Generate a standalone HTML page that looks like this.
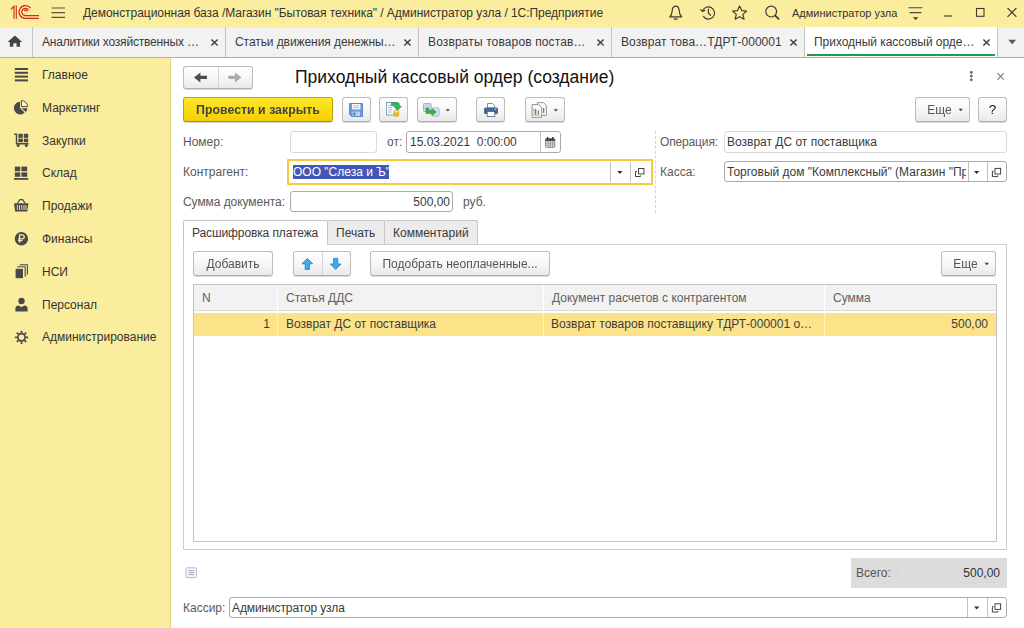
<!DOCTYPE html>
<html lang="ru"><head><meta charset="utf-8"><title>1С:Предприятие</title>
<style>
*{box-sizing:border-box;margin:0;padding:0}
html,body{width:1024px;height:628px;overflow:hidden;background:#fff}
body{font-family:"Liberation Sans",Arial,sans-serif;font-size:12px;color:#333;position:relative}
.abs{position:absolute}
svg{position:absolute;overflow:visible}
#titlebar{left:0;top:0;width:1024px;height:27px;background:#fbed9e}
#tabbar{left:0;top:27px;width:1024px;height:31px;background:#f2f2f2;border-bottom:1px solid #b0b0b0}
#sidebar{left:0;top:58px;width:171px;height:570px;background:#fbed9e;border-right:1px solid #e3d48a}
.t{position:absolute;white-space:nowrap;line-height:16px}
.tab{position:absolute;top:0;height:30px;border-right:1px solid #c4c4c4}
.tab .t{top:7px;left:9px;font-size:12px;color:#3a3a3a}
.tab .x{position:absolute;top:11.5px;left:177.5px}
.btn{position:absolute;border:1px solid #bcbcbc;border-bottom-color:#b0b0b0;border-radius:3px;background:linear-gradient(#ffffff 0%,#f7f7f7 50%,#e9e9e9 100%);box-shadow:0 1px 0 rgba(0,0,0,.15);font-size:12px;color:#545454;text-align:center;white-space:nowrap}
.btn .c{position:absolute;left:0;right:0;top:4px;line-height:16px;will-change:transform}
.inp{position:absolute;border:1px solid #aaa;border-radius:3px;background:#fff;height:22px}
.inp.ro{border-color:#d9d9d9}
.inp .t{top:2px;left:2px;color:#3a3a3a}
.inp .dv{position:absolute;top:0;bottom:0;width:1px;background:#c0c0c0}
.lbl{position:absolute;white-space:nowrap;font-size:12px;line-height:16px;color:#5a5a5a}
.menu .t{left:42px;font-size:12px;color:#333}
.th{position:absolute;top:0;height:26px;border-right:1px solid #fff}
.th .t{top:5px;left:8px;color:#606060}
.td{position:absolute;top:0;height:23px;border-right:1px solid #fdf1c0}
.td .t{top:3px;color:#3c3c3c}
</style></head><body>
<div id="titlebar" class="abs">
  <svg width="1024" height="27" style="left:0;top:0" viewBox="0 0 1024 27">
    <!-- 1C logo -->
    <g fill="none" stroke="#d9251d" stroke-width="1.1">
      <path d="M11 9.3 L14 6.2 V18.8"/>
      <path d="M16.3 5.6 V18.8"/>
      <path d="M30.6 8.2 A6.4 6.4 0 1 0 25.5 18.4 H39"/>
      <path d="M28.6 10.2 A3.6 3.6 0 1 0 25.5 15.6 H39"/>
      <path d="M27.2 11.4 A1.7 1.7 0 0 0 24.2 10.8"/>
    </g>
    <!-- hamburger -->
    <g stroke="#57533a" stroke-width="1.2"><path d="M51.5 8 H65 M51.5 12.6 H65 M51.5 17.3 H65"/></g>
    <!-- bell -->
    <g fill="none" stroke="#3f3d30" stroke-width="1.2" stroke-linejoin="round" stroke-linecap="round">
      <path d="M669.8 16.8 C672 15 672 13 672.2 10.5 C672.5 7.5 674 6.2 675.7 6.2 C677.4 6.2 678.9 7.5 679.2 10.5 C679.4 13 679.4 15 681.6 16.8 Z"/>
      <path d="M674.2 18.8 Q675.7 20 677.2 18.8"/>
      <!-- history -->
      <path d="M702.6 11.2 A6.1 6.1 0 1 1 703.4 16.4"/>
      <path d="M700.8 9.6 L702.6 11.6 L704.8 10.2"/>
      <path d="M708.4 9.2 V13 L710.6 15.4"/>
      <!-- star -->
      <path d="M739.6 6 L741.7 10.6 L746.6 11.1 L742.9 14.4 L744 19.2 L739.6 16.7 L735.2 19.2 L736.3 14.4 L732.6 11.1 L737.5 10.6 Z"/>
      <!-- search -->
      <circle cx="771.2" cy="11.6" r="5.4"/>
      <path d="M775.2 15.6 L778.6 18.8" stroke-width="1.8"/>
    </g>
    <!-- settings -->
    <g stroke="#4a4838" stroke-width="1.1"><path d="M908.5 7.8 H922.3 M909.6 12.6 H921.4"/></g>
    <path d="M912.8 17.2 H918.4 L915.6 19.9 Z" fill="#3c3a2e"/>
    <!-- window buttons -->
    <g fill="none" stroke="#3c3a2e" stroke-width="1.1">
      <path d="M944 16 H952"/>
      <rect x="976.5" y="8.5" width="7.5" height="7.8"/>
      <path d="M1007.5 8 L1016.4 16.8 M1016.4 8 L1007.5 16.8"/>
    </g>
  </svg>

  <div class="t" style="left:83px;top:5px;font-size:12px;color:#333;letter-spacing:-0.04px">Демонстрационная база /Магазин "Бытовая техника" / Администратор узла / 1С:Предприятие</div>
  <div class="t" style="left:792px;top:5px;font-size:11px;color:#333">Администратор узла</div>
</div>
<div id="tabbar" class="abs"><div class="abs" style="left:0;top:0;width:1024px;height:1px;background:#f7f0cf"></div>
  <svg width="1024" height="31" style="left:0;top:0" viewBox="0 27 1024 31">
    <path d="M14.9 35.6 L7.6 42 H9.8 V46.8 H13.3 V43.2 H16.5 V46.8 H20 V42 H22.2 Z" fill="#444"/>
    <path d="M1008.3 39.8 H1016.1 L1012.2 44.2 Z" fill="#555"/>
  </svg>

  <div class="tab" style="left:0;width:33px"></div>
  <div class="tab" style="left:33px;width:193px"><div class="t" style="letter-spacing:-0.18px">Аналитики хозяйственных …</div><svg class="x" width="7" height="7" viewBox="0 0 7 7"><path d="M0.4 0.4 L6.6 6.6 M6.6 0.4 L0.4 6.6" stroke="#3a3a3a" stroke-width="1.35" fill="none"/></svg></div>
  <div class="tab" style="left:226px;width:193px"><div class="t" style="letter-spacing:-0.075px">Статьи движения денежны…</div><svg class="x" width="7" height="7" viewBox="0 0 7 7"><path d="M0.4 0.4 L6.6 6.6 M6.6 0.4 L0.4 6.6" stroke="#3a3a3a" stroke-width="1.35" fill="none"/></svg></div>
  <div class="tab" style="left:419px;width:193px"><div class="t" style="letter-spacing:0.13px">Возвраты товаров постав…</div><svg class="x" width="7" height="7" viewBox="0 0 7 7"><path d="M0.4 0.4 L6.6 6.6 M6.6 0.4 L0.4 6.6" stroke="#3a3a3a" stroke-width="1.35" fill="none"/></svg></div>
  <div class="tab" style="left:612px;width:193px"><div class="t" style="letter-spacing:0.07px">Возврат това…ТДРТ-000001</div><svg class="x" width="7" height="7" viewBox="0 0 7 7"><path d="M0.4 0.4 L6.6 6.6 M6.6 0.4 L0.4 6.6" stroke="#3a3a3a" stroke-width="1.35" fill="none"/></svg></div>
  <div class="tab" style="left:805px;width:193px;background:#fff"><div class="t" style="left:9px;letter-spacing:-0.04px">Приходный кассовый орде…</div><svg class="x" width="7" height="7" viewBox="0 0 7 7"><path d="M0.4 0.4 L6.6 6.6 M6.6 0.4 L0.4 6.6" stroke="#3a3a3a" stroke-width="1.35" fill="none"/></svg>
    <div class="abs" style="left:2px;right:2px;top:27px;height:2px;background:#1f9d49"></div></div>
</div>
<div id="sidebar" class="abs menu">
  <svg width="40" height="570" style="left:0;top:0" viewBox="0 58 40 570">
    <g fill="#494949" stroke="none">
      <!-- main -->
      <rect x="14.8" y="68" width="13.2" height="2"/><rect x="14.8" y="71.8" width="13.2" height="2"/><rect x="14.8" y="75.6" width="13.2" height="2"/><rect x="14.8" y="79.4" width="13.2" height="2"/>
      <!-- marketing pie -->
      <path d="M20 101.8 A6.3 6.3 0 1 0 24.6 112.6 L20 108 Z"/>
      <path d="M21.6 108.2 H27.4 A6 6 0 0 1 25.8 111.9 Z"/>
      <path d="M21.4 100.6 A6 6 0 0 1 27.6 106.6 H21.4 Z" fill="#fdf6d0" stroke="#494949" stroke-width="1"/>
      <!-- purchases cart -->
      <path d="M14.2 133.6 H17.2 V143 H28.6 V144.4 H15.8 V135 H14.2 Z"/>
      <rect x="18.4" y="133.8" width="4.4" height="4"/><rect x="23.8" y="133.8" width="4.4" height="4"/>
      <rect x="18.4" y="138.6" width="4.4" height="3.6"/><rect x="23.8" y="138.6" width="4.4" height="3.6"/>
      <circle cx="18.2" cy="145.6" r="1.5"/><circle cx="26.4" cy="145.6" r="1.5"/>
      <!-- warehouse -->
      <rect x="14.8" y="166.6" width="5.4" height="4.6"/><rect x="21.4" y="166.6" width="5.8" height="4.6"/>
      <rect x="14.8" y="172.4" width="5.4" height="4.4"/><rect x="21.4" y="172.4" width="5.8" height="4.4"/>
      <rect x="14" y="178" width="14.2" height="1.8"/>
      <!-- sales basket -->
      <path d="M14 203.2 H28.4 L27.2 211.6 H15.2 Z"/>
      <!-- finance -->
      <circle cx="21.4" cy="238.7" r="6.7"/>
      <!-- nsi -->
      <rect x="15.6" y="268.8" width="7.4" height="9.4"/>
      <!-- personnel -->
      <circle cx="21.5" cy="301" r="3.2"/>
      <path d="M15.4 311.4 V308.4 Q15.4 306 18.4 305.6 L21.5 307 L24.6 305.6 Q27.6 306 27.6 308.4 V311.4 Z"/>
    </g>
    <g fill="none" stroke="#494949">
      <path d="M17.4 203 L20 199.6 M25 203 L22.6 199.6 M19.4 199.6 H23.4" stroke-width="1.2"/>
      <path d="M17.4 205 V210 M19.6 205 V210 M21.8 205 V210 M24 205 V210 M26 205 V210" stroke="#fbed9e" stroke-width="0.9"/>
      <path d="M19.6 242.6 V234.8 H22.2 A2 2 0 0 1 22.2 238.8 H18 M18 240.6 H22.4" stroke="#fbed9e" stroke-width="1.3"/>
      <path d="M18 267.4 V266.8 H25.2 V276 H24.4 M20.2 265.2 V264.8 H27.4 V274 H26.6" stroke-width="1.1"/>
      <circle cx="21.5" cy="337.3" r="3.6" stroke-width="1.7"/>
      <path d="M25.70 337.30 L28.10 337.30 M24.47 340.27 L26.17 341.97 M21.50 341.50 L21.50 343.90 M18.53 340.27 L16.83 341.97 M17.30 337.30 L14.90 337.30 M18.53 334.33 L16.83 332.63 M21.50 333.10 L21.50 330.70 M24.47 334.33 L26.17 332.63 " stroke-width="1.8"/>
    </g>
  </svg>

  <div class="t" style="top:9px">Главное</div>
  <div class="t" style="top:42px">Маркетинг</div>
  <div class="t" style="top:75px">Закупки</div>
  <div class="t" style="top:107px">Склад</div>
  <div class="t" style="top:140px">Продажи</div>
  <div class="t" style="top:173px">Финансы</div>
  <div class="t" style="top:206px">НСИ</div>
  <div class="t" style="top:239px">Персонал</div>
  <div class="t" style="top:271px">Администрирование</div>
</div>
<div id="main" class="abs" style="left:0;top:0;width:1024px;height:628px">
  <!-- nav -->
  <div class="btn" style="left:183px;top:66px;width:70px;height:23px"><div class="abs" style="left:34px;top:0;bottom:0;width:1px;background:#d5d5d5"></div></div>
  <div class="t" style="left:295px;top:66px;font-size:17.5px;line-height:22px;color:#111">Приходный кассовый ордер (создание)</div>
  <!-- toolbar -->
  <div class="btn" style="left:183px;top:97px;width:150px;height:25px;background:linear-gradient(#ffe72b,#f5d000);border-color:#c4a700 #bfa200 #a89000;color:#444;font-weight:bold;font-size:12.35px"><div class="c">Провести и закрыть</div></div>
  <div class="btn" style="left:342px;top:97px;width:29px;height:25px"></div>
  <div class="btn" style="left:379px;top:97px;width:29px;height:25px"></div>
  <div class="btn" style="left:417px;top:97px;width:40px;height:25px"></div>
  <div class="btn" style="left:476px;top:97px;width:29px;height:25px"></div>
  <div class="btn" style="left:525px;top:97px;width:40px;height:25px"></div>
  <div class="btn" style="left:915px;top:97px;width:55px;height:25px"><div class="c" style="right:6px">Еще</div></div>
  <div class="btn" style="left:978px;top:97px;width:29px;height:25px;color:#111;font-size:13.5px"><div class="c">?</div></div>
  <!-- fields -->
  <div class="lbl" style="left:183px;top:134px">Номер:</div>
  <div class="inp ro" style="left:290px;top:131px;width:87px"></div>
  <div class="lbl" style="left:387px;top:134px">от:</div>
  <div class="inp" style="left:406px;top:131px;width:155px"><div class="t" style="left:3px">15.03.2021&nbsp; 0:00:00</div><div class="dv" style="left:133px"></div></div>
  <div class="lbl" style="left:183px;top:164px">Контрагент:</div>
  <div class="inp" style="left:287px;top:159px;width:366px;height:26px;border:2px solid #f8cb3c;border-radius:1px">
     <div class="abs" style="left:4px;top:4px;width:96px;height:14px;background:#4457b8"></div>
     <div class="t" style="left:4px;top:3px;color:#fff">ООО "Слеза и Ъ"</div>
     <div class="dv" style="left:321px;top:1px;bottom:1px"></div><div class="dv" style="left:341px;top:1px;bottom:1px"></div></div>
  <div class="lbl" style="left:183px;top:194px;letter-spacing:-0.06px">Сумма документа:</div>
  <div class="inp" style="left:290px;top:191px;width:163px;height:21px"><div class="t" style="left:auto;right:2px">500,00</div></div>
  <div class="lbl" style="left:463px;top:194px">руб.</div>
  <div class="abs" style="left:655px;top:131px;width:0;height:82px;border-left:1px dashed #d4d4d4"></div>
  <div class="lbl" style="left:660px;top:134px;letter-spacing:-0.15px">Операция:</div>
  <div class="inp ro" style="left:724px;top:131px;width:283px"><div class="t">Возврат ДС от поставщика</div></div>
  <div class="lbl" style="left:660px;top:164px">Касса:</div>
  <div class="inp" style="left:724px;top:161px;width:283px;height:21px"><div class="t" style="width:239px;overflow:hidden">Торговый дом "Комплексный" (Магазин "Префикс</div><div class="dv" style="left:243px"></div><div class="dv" style="left:262px"></div></div>
  <!-- tab panel -->
  <div class="abs" style="left:183px;top:244px;width:824px;height:306px;border:1px solid #cdcdcd"></div>
  <div class="abs" style="left:328px;top:220px;width:57px;height:24px;background:#ececec;border:1px solid #c6c6c6;border-left:0;border-bottom:0;border-radius:2px 2px 0 0"><div class="t" style="left:8px;top:4px;color:#3a3a3a">Печать</div></div>
  <div class="abs" style="left:385px;top:220px;width:93px;height:24px;background:#ececec;border:1px solid #c6c6c6;border-left:0;border-bottom:0;border-radius:2px 2px 0 0"><div class="t" style="left:8px;top:4px;color:#3a3a3a">Комментарий</div></div>
  <div class="abs" style="left:183px;top:220px;width:145px;height:25px;background:#fff;border:1px solid #c6c6c6;border-bottom:0;border-radius:2px 2px 0 0"><div class="t" style="left:8px;top:4px;letter-spacing:-0.11px;color:#3a3a3a">Расшифровка платежа</div></div>
  <div class="btn" style="left:193px;top:251px;width:80px;height:25px"><div class="c">Добавить</div></div>
  <div class="btn" style="left:293px;top:251px;width:58px;height:25px"><div class="abs" style="left:28px;top:0;bottom:0;width:1px;background:#d5d5d5"></div></div>
  <div class="btn" style="left:370px;top:251px;width:180px;height:25px"><div class="c">Подобрать неоплаченные...</div></div>
  <div class="btn" style="left:941px;top:251px;width:55px;height:25px"><div class="c" style="right:6px">Еще</div></div>
  <!-- table -->
  <div class="abs" style="left:193px;top:284px;width:804px;height:258px;border:1px solid #c2c2c2;background:#fff">
    <div class="abs" style="left:0;top:0;right:0;height:26px;background:#f2f2f2;border-bottom:1px solid #dcdcdc">
      <div class="th" style="left:0;width:84px"><div class="t">N</div></div>
      <div class="th" style="left:84px;width:266px"><div class="t">Статья ДДС</div></div>
      <div class="th" style="left:350px;width:281px"><div class="t">Документ расчетов с контрагентом</div></div>
      <div class="th" style="left:631px;width:171px;border-right:0"><div class="t">Сумма</div></div>
    </div>
    <div class="abs" style="left:0;top:28px;right:0;height:23px;background:#fce38a">
      <div class="td" style="left:0;width:84px"><div class="t" style="right:7px">1</div></div>
      <div class="td" style="left:84px;width:266px"><div class="t" style="left:8px">Возврат ДС от поставщика</div></div>
      <div class="td" style="left:350px;width:281px"><div class="t" style="left:7px">Возврат товаров поставщику ТДРТ-000001 о…</div></div>
      <div class="td" style="left:631px;width:171px;border-right:0"><div class="t" style="right:8px">500,00</div></div>
    </div>
  </div>
  <!-- footer -->
  <div class="abs" style="left:851px;top:558px;width:156px;height:30px;background:#dcdcdc">
    <div class="abs" style="left:46px;top:4px;width:106px;height:21px;border:1px solid #d7d7d7;border-radius:3px"></div>
    <div class="t" style="left:5px;top:7px;color:#555">Всего:</div>
    <div class="t" style="right:7px;top:7px;color:#333">500,00</div>
  </div>
  <div class="lbl" style="left:183px;top:600px">Кассир:</div>
  <div class="inp" style="left:229px;top:597px;width:778px;height:21px"><div class="t" style="letter-spacing:-0.12px">Администратор узла</div><div class="dv" style="left:737px"></div><div class="dv" style="left:757px"></div></div>

  <svg width="1024" height="628" style="left:0;top:0;pointer-events:none" viewBox="0 0 1024 628">
    <!-- nav arrows -->
    <path d="M194 77.4 L200.4 72.4 V75.8 H207 V79 H200.4 V82.4 Z" fill="#4d4d4d"/>
    <path d="M241.4 77.4 L235 72.4 V75.8 H228.4 V79 H235 V82.4 Z" fill="#a9a9a9"/>
    <!-- form header: dots and close -->
    <g fill="#606060"><circle cx="971.3" cy="72.4" r="1.4"/><circle cx="971.3" cy="76.1" r="1.4"/><circle cx="971.3" cy="79.8" r="1.4"/></g>
    <path d="M997.4 73.1 L1003.8 79.6 M1003.8 73.1 L997.4 79.6" stroke="#777" stroke-width="1.1" fill="none"/>
    <!-- save (floppy) -->
    <path d="M349.5 103.5 H362.5 V116.5 H351.5 L349.5 114.5 Z" fill="#6a9ce0" stroke="#5283c8" stroke-width="0.9"/>
    <rect x="352" y="104" width="8.4" height="5.4" fill="#f4f8fd"/>
    <path d="M353.4 105.8 H359 M353.4 107.6 H359" stroke="#9db4d3" stroke-width="0.8"/>
    <rect x="352.6" y="111.6" width="7.4" height="4.4" fill="#c9ced6"/>
    <rect x="353.6" y="112.6" width="1.8" height="2.8" fill="#3f6fb4"/>
    <!-- post (doc + green arrow + coins) -->
    <rect x="386.5" y="102.5" width="10" height="12.5" fill="#fbfcfe" stroke="#8aa0bd" stroke-width="1"/>
    <path d="M388.4 105.4 H394 M388.4 107.6 H392 M388.4 109.8 H392 M388.4 112 H391.4" stroke="#8f9db0" stroke-width="0.8"/>
    <path d="M391.4 102.6 H397.6 Q399.4 102.6 399.4 104.6 V106.4 H401.4 L397.6 110.4 L393.8 106.4 H395.8 V105.6 H391.4 Z" fill="#2fb85f" stroke="#1e9748" stroke-width="0.6"/>
    <path d="M393.2 111.6 V115.6 A3 1.4 0 0 0 399.2 115.6 V111.6 Z" fill="#e8c233"/>
    <ellipse cx="396.2" cy="111.6" rx="3" ry="1.4" fill="#f7e07a" stroke="#c9a31f" stroke-width="0.5"/>
    <path d="M393.2 113.6 A3 1.4 0 0 0 399.2 113.6" fill="none" stroke="#c9a31f" stroke-width="0.5"/>
    <!-- create based on -->
    <rect x="423.5" y="103.5" width="7.6" height="8" rx="1" fill="#c7d6ea" stroke="#9db3d0" stroke-width="1"/>
    <rect x="431.5" y="108" width="7.4" height="8" rx="1" fill="#dbe6f3" stroke="#9db3d0" stroke-width="1"/>
    <path d="M426 108 H428.8 V110.6 H432.4 V108.8 L436.4 112 L432.4 115.2 V113.4 H426 Z" fill="#3fb049" stroke="#2a8f35" stroke-width="0.6"/>
    <path d="M445.6 109.2 H450 L447.8 111.6 Z" fill="#444"/>
    <!-- printer -->
    <path d="M487.5 108 V103.5 H492.4 L494.5 105.6 V108 Z" fill="#fff" stroke="#6a87ad" stroke-width="0.9"/>
    <rect x="484" y="107.4" width="14" height="6.6" rx="1.6" fill="#456a99"/>
    <rect x="487.2" y="111.4" width="7.6" height="5" fill="#fff" stroke="#3f6391" stroke-width="0.8"/>
    <rect x="494.6" y="108.8" width="1.6" height="1" fill="#cfe0f5"/>
    <!-- reports -->
    <path d="M537.5 102.6 H543.6 L546.4 105.4 V115.4 H537.5 Z" fill="#f6f6f6" stroke="#8d8d8d" stroke-width="0.9"/>
    <path d="M532 104.6 H538.6 L541.6 107.6 V117.4 H532 Z" fill="#fafafa" stroke="#8d8d8d" stroke-width="0.9"/>
    <path d="M543.6 108 V113" stroke="#3aa845" stroke-width="1.3"/>
    <path d="M533.8 108 V115.2 H540" stroke="#999" stroke-width="0.7" fill="none"/>
    <path d="M535.6 109 V114.6" stroke="#e14b3b" stroke-width="1.4"/>
    <path d="M538.4 110.6 V114.6" stroke="#3aa845" stroke-width="1.4"/>
    <path d="M553.6 109.2 H558 L555.8 111.6 Z" fill="#444"/>
    <!-- Еще arrows -->
    <path d="M958.5 108.8 H963 L960.75 111.3 Z" fill="#444"/>
    <path d="M984.5 262.8 H989 L986.75 265.3 Z" fill="#444"/>
    <!-- calendar -->
    <rect x="545.6" y="138.6" width="9.2" height="8.8" rx="1" fill="#f3f3f3" stroke="#666" stroke-width="0.8"/>
    <rect x="545.6" y="138.6" width="9.2" height="2.6" fill="#4a4a4a"/>
    <path d="M547.6 137 V139.6 M552.8 137 V139.6" stroke="#333" stroke-width="1.3"/>
    <path d="M546 143 H554.4 M546 145.2 H554.4 M548.2 141.4 V147 M550.4 141.4 V147 M552.6 141.4 V147" stroke="#777" stroke-width="0.6"/>
    <!-- dropdown arrows + open icons -->
    <path d="M617.2 171 H622.6 L619.9 174 Z" fill="#333"/>
    <g fill="none" stroke="#444" stroke-width="1"><rect x="638.5" y="168.5" width="5.4" height="5.4"/><path d="M637 171.5 H635.5 V176.5 H640.5 V175.4"/></g>
    <path d="M974 171 H979.4 L976.7 174 Z" fill="#333"/>
    <g fill="none" stroke="#444" stroke-width="1"><rect x="995" y="168.4" width="5.6" height="5.6"/><path d="M993.6 171.2 H992.4 V176.6 H997.8 V175.4"/></g>
    <path d="M974 606.6 H979.4 L976.7 609.6 Z" fill="#333"/>
    <g fill="none" stroke="#444" stroke-width="1"><rect x="995" y="603.8" width="5.6" height="5.6"/><path d="M993.6 606.6 H992.4 V612 H997.8 V610.8"/></g>
    <!-- blue arrows -->
    <path d="M307.3 258.4 L312.6 263.8 H309.4 V269.4 H305.2 V263.8 H302 Z" fill="#45a9f0" stroke="#2685cc" stroke-width="0.9" stroke-linejoin="round"/>
    <path d="M335.6 269.4 L341 264 H337.8 V258.4 H333.6 V264 H330.4 Z" fill="#45a9f0" stroke="#2685cc" stroke-width="0.9" stroke-linejoin="round"/>
    <!-- footer small icon -->
    <rect x="186" y="567.8" width="10.6" height="9.8" rx="1" fill="#f4f6f9" stroke="#a9b4c6" stroke-width="0.9"/>
    <path d="M188.4 570.6 H194.2 M188.4 572.6 H194.2 M188.4 574.6 H194.2" stroke="#8d98aa" stroke-width="0.8"/>
  </svg>
</div>
</body></html>
